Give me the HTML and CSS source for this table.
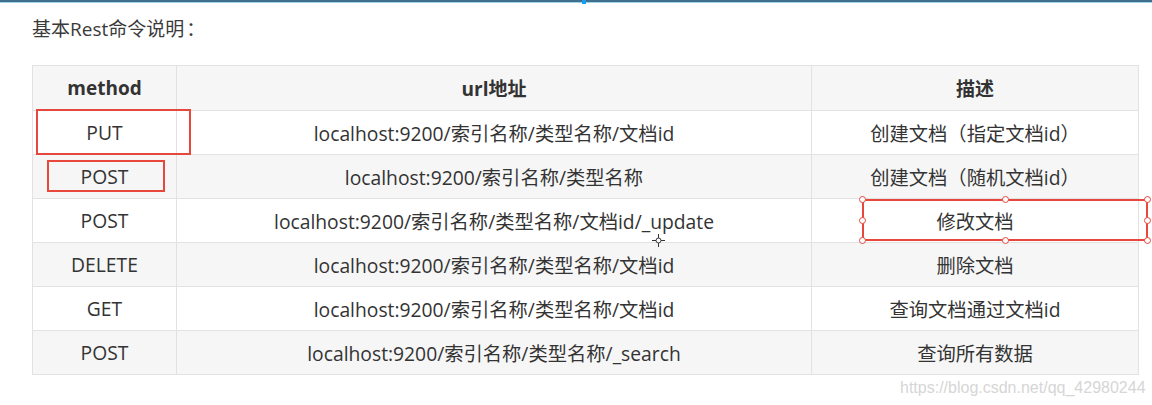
FILE: index.html
```html
<!DOCTYPE html>
<html lang="zh">
<head>
<meta charset="utf-8">
<link rel="stylesheet" href="styles.css">
</head>
<body>
<div class="topbar"><span class="topmark"></span></div>
<div class="page">
  <p class="title">基本Rest命令说明<span class="colon">：</span></p>
  <div class="tablewrap">
    <table class="cmds">
      <colgroup><col class="c1"><col class="c2"><col class="c3"></colgroup>
      <thead>
        <tr><th>method</th><th>url地址</th><th>描述</th></tr>
      </thead>
      <tbody>
        <tr><td>PUT</td><td>localhost:9200/索引名称/类型名称/文档id</td><td>创建文档（指定文档id）</td></tr>
        <tr><td>POST</td><td>localhost:9200/索引名称/类型名称</td><td>创建文档（随机文档id）</td></tr>
        <tr><td>POST</td><td>localhost:9200/索引名称/类型名称/文档id/_update</td><td>修改文档</td></tr>
        <tr><td>DELETE</td><td>localhost:9200/索引名称/类型名称/文档id</td><td>删除文档</td></tr>
        <tr><td>GET</td><td>localhost:9200/索引名称/类型名称/文档id</td><td>查询文档通过文档id</td></tr>
        <tr><td>POST</td><td>localhost:9200/索引名称/类型名称/_search</td><td>查询所有数据</td></tr>
      </tbody>
    </table>
    <div class="mark mark-put"></div>
    <div class="mark mark-post"></div>
    <div class="mark mark-sel">
      <span class="h h-tl"></span><span class="h h-tm"></span><span class="h h-tr"></span>
      <span class="h h-ml"></span><span class="h h-mr"></span>
      <span class="h h-bl"></span><span class="h h-bm"></span><span class="h h-br"></span>
    </div>
    <svg class="cursor" width="13" height="13" viewBox="0 0 13 13">
      <path d="M6.5 0v13M0 6.5h13" stroke="#333" stroke-width="1"/>
      <circle cx="6.5" cy="6.5" r="2.5" fill="#fff" stroke="#333" stroke-width="1"/>
    </svg>
  </div>
  <div class="watermark">https://blog.csdn.net/qq_42980244</div>
</div>
</body>
</html>
```
FILE: styles.css
```css
html, body {
  margin: 0;
  padding: 0;
  background: #fff;
}
body {
  width: 1152px;
  height: 405px;
  overflow: hidden;
  font-family: "Open Sans", "Noto Sans CJK SC", sans-serif;
  color: #333;
}
.topbar {
  position: relative;
  height: 3px;
  background: linear-gradient(#3f6f8c 0, #3f6f8c 2px, #9fd3ea 2px, #9fd3ea 3px);
}
.topmark {
  position: absolute;
  left: 582px;
  top: 0;
  width: 4px;
  height: 4px;
  background: #1a9cf0;
}
.page {
  position: relative;
  padding: 0 0 0 32px;
}
.title {
  margin: 0;
  padding-top: 13px;
  height: 62px;
  box-sizing: border-box;
  font-size: 19px;
  line-height: 24px;
  color: #3a3a3a;
}
.colon {
  font-family: "Noto Sans CJK TC", sans-serif;
  padding-left: 2px;
}
.tablewrap {
  position: relative;
  width: 1106px;
}
.cmds {
  border-collapse: collapse;
  table-layout: fixed;
  width: 1106px;
  font-size: 19.3px;
}
.c1 { width: 144px; }
.c2 { width: 635px; }
.c3 { width: 327px; }
.cmds th, .cmds td {
  border: 1px solid #e2e2e2;
  text-align: center;
  padding: 0;
  height: 43px;
  white-space: nowrap;
}
.cmds th {
  font-weight: 700;
  font-size: 19px;
  height: 44px;
  background: #f6f6f6;
  color: #333;
}
.cmds tbody tr:nth-child(even) td {
  background: #f6f6f6;
}
.mark {
  position: absolute;
  border: 2px solid #e8473d;
  box-sizing: border-box;
}
.mark-put {
  left: 4px;
  top: 44px;
  width: 155px;
  height: 46px;
}
.mark-post {
  left: 15px;
  top: 95px;
  width: 118px;
  height: 32px;
}
.mark-sel {
  left: 830px;
  top: 134px;
  width: 286px;
  height: 42px;
}
.h {
  position: absolute;
  width: 7px;
  height: 7px;
  border: 1.5px solid #e8473d;
  border-radius: 50%;
  background: #fff;
  box-sizing: border-box;
}
.h-tl { left: -5px; top: -5px; }
.h-tm { left: 138px; top: -5px; }
.h-tr { right: -5px; top: -5px; }
.h-ml { left: -5px; top: 16px; }
.h-mr { right: -5px; top: 16px; }
.h-bl { left: -5px; bottom: -5px; }
.h-bm { left: 138px; bottom: -5px; }
.h-br { right: -5px; bottom: -5px; }
.cursor {
  position: absolute;
  left: 620px;
  top: 169px;
}
.watermark {
  position: absolute;
  left: 900px;
  top: 376px;
  line-height: 18px;
  font-family: "Liberation Sans", Arial, sans-serif;
  font-size: 16px;
  color: #d6d6d6;
}
```
